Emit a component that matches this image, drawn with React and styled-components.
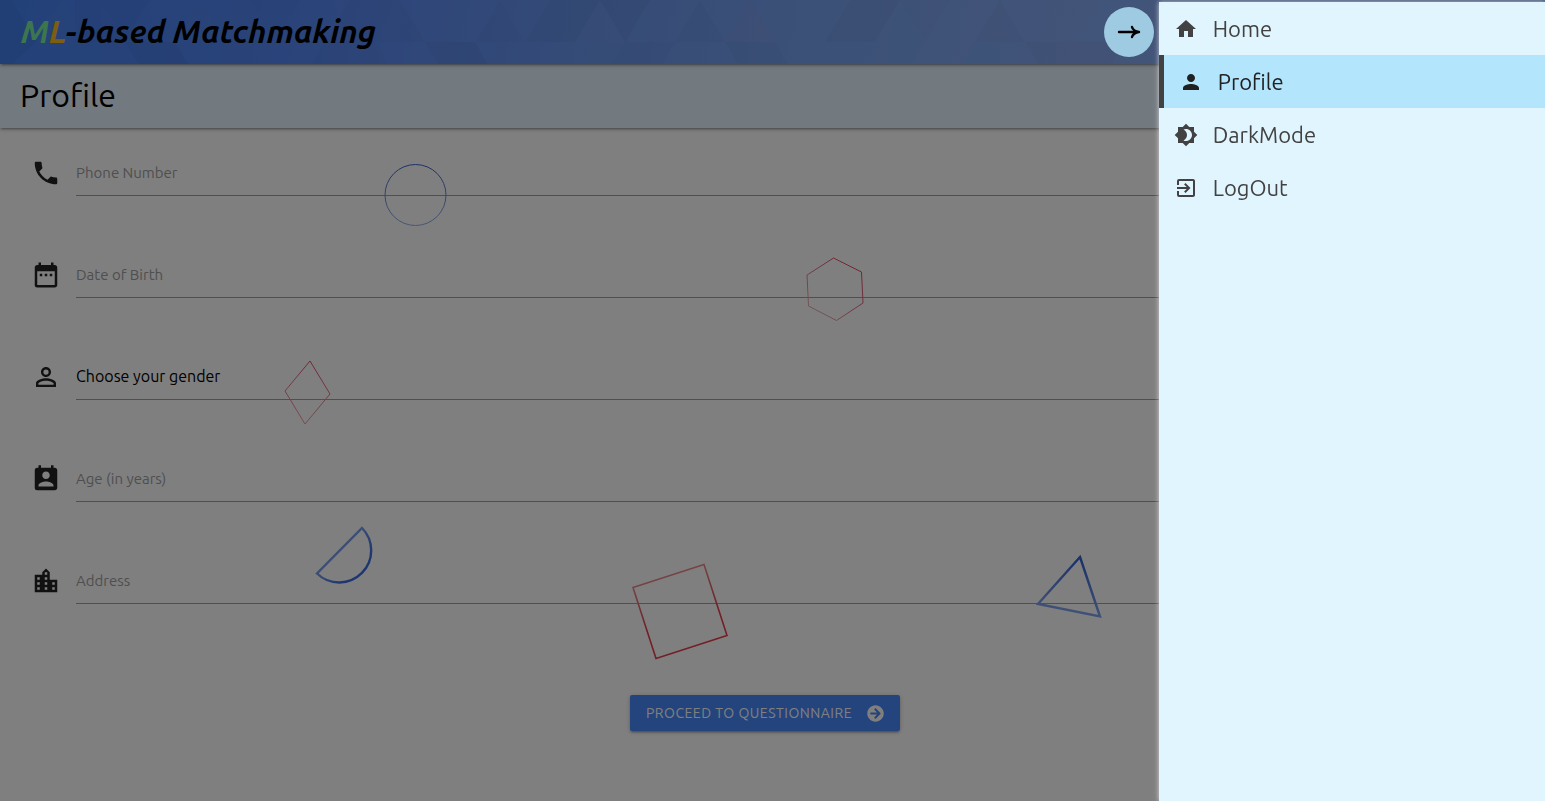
import React from "react";
import styled, { createGlobalStyle } from "styled-components";
import {
  MdHome,
  MdPerson,
  MdBrightness4,
  MdExitToApp,
  MdPhone,
  MdDateRange,
  MdPersonOutline,
  MdPermContactCalendar,
  MdLocationCity,
} from "react-icons/md";
import { FaArrowCircleRight } from "react-icons/fa";

const GlobalStyle = createGlobalStyle`
  *, *::before, *::after { box-sizing: border-box; }
  html, body { margin: 0; background: #fff; overflow: hidden; }
  body, button, input, select {
    font-family: Ubuntu, "Noto Sans", "Open Sans", sans-serif;
    font-weight: 430;
  }
`;

const barShadow = "0 2px 2px rgba(0, 0, 0, 0.14), 0 3px 1px -2px rgba(0, 0, 0, 0.12), 0 1px 5px rgba(0, 0, 0, 0.2)";

const Page = styled.div`
  position: relative;
  min-height: 100vh;
`;

const TopBar = styled.header`
  position: relative;
  z-index: 1;
  display: flex;
  align-items: center;
  height: 64px;
  padding: 0 21px;
  background: linear-gradient(100deg, #4683f2 0%, #5688f4 20%, #6896f0 36%, #78a2ee 52%, #86a8f2 70%, #8aabf8 100%);
  box-shadow: ${barShadow};
`;

const Pattern = styled.svg`
  position: absolute;
  inset: 0;
  width: 100%;
  height: 100%;
`;

const Brand = styled.h1`
  position: relative;
  margin: 0 0 2px;
  font-size: 32px;
  line-height: 60px;
  font-style: italic;
  font-weight: 670;
  white-space: nowrap;
  color: #000;
`;

const Letter = styled.span`
  color: ${(p) => p.$color};
`;

const SubBar = styled.div`
  height: 64px;
  padding: 0 20px;
  background: #e4f2ff;
  box-shadow: ${barShadow};
`;

const PageTitle = styled.h2`
  margin: 0;
  font-size: 32px;
  line-height: 62px;
  font-weight: 430;
  color: #000;
`;

const Form = styled.form`
  display: flex;
  flex-direction: column;
  gap: 56px;
  padding: 22px 46px 0 31px;
`;

const Field = styled.div`
  display: grid;
  grid-template-columns: 30px 1fr;
  column-gap: 15px;
  align-items: center;
  height: 46px;

  svg {
    display: block;
    width: 30px;
    height: 30px;
    color: #222;
  }
`;

const FieldLabel = styled.label`
  grid-area: 1 / 2;
  justify-self: start;
  font-size: 15px;
  line-height: 20px;
  color: #9e9e9e;
  cursor: text;
`;

const control = `
  grid-area: 1 / 2;
  width: 100%;
  height: 46px;
  margin: 0;
  padding: 0;
  border: 0;
  border-bottom: 1px solid #9e9e9e;
  border-radius: 0;
  background: transparent;
  color: #000;
  font-size: 16px;
  outline: 0;
`;

const TextInput = styled.input`
  ${control}
`;

const Select = styled.select`
  ${control}
  appearance: none;
  padding-bottom: 2px;
`;

const Actions = styled.div`
  display: flex;
  justify-content: center;
  padding-top: 35px;
`;

const Submit = styled.button`
  display: flex;
  align-items: center;
  gap: 15px;
  height: 36px;
  padding: 0 16px;
  border: 0;
  border-radius: 2px;
  background: #4688f8;
  color: #fff;
  font-size: 14px;
  letter-spacing: 0.5px;
  text-transform: uppercase;
  white-space: nowrap;
  box-shadow: ${barShadow};

  svg { width: 17px; height: 17px; }
`;

const Shapes = styled.svg`
  position: absolute;
  top: 0;
  left: 0;
  pointer-events: none;
`;

const Overlay = styled.div`
  position: fixed;
  z-index: 2;
  inset: 0;
  background: rgba(0, 0, 0, 0.5);
`;

const Drawer = styled.aside`
  position: fixed;
  z-index: 3;
  top: 2px;
  right: 0;
  bottom: 0;
  width: 25%;
  background: #e1f5fe;
  box-shadow: 0 0 5px rgba(255, 255, 255, 0.7);
`;

const CloseButton = styled.button`
  position: absolute;
  top: 5px;
  right: calc(100% + 5px);
  display: grid;
  place-items: center;
  width: 50px;
  height: 50px;
  padding: 0;
  border: 0;
  border-radius: 50%;
  background: #9ecae2;
`;

const Menu = styled.nav`
  display: flex;
  flex-direction: column;
`;

const MenuLink = styled.a`
  display: flex;
  align-items: center;
  gap: 15px;
  height: 53px;
  padding-left: 15px;
  border-left: ${(p) => (p.$active ? "5px solid #424242" : "0")};
  background: ${(p) => (p.$active ? "#b3e5fc" : "transparent")};
  color: ${(p) => (p.$active ? "#212121" : "#424242")};
  font-size: 22px;
  text-decoration: none;

  svg { flex: none; width: 24px; height: 24px; }
`;

const fields = [
  { id: "phone", label: "Phone Number", Icon: MdPhone },
  { id: "dob", label: "Date of Birth", Icon: MdDateRange },
  { id: "gender", label: "Choose your gender", Icon: MdPersonOutline, select: true },
  { id: "age", label: "Age (in years)", Icon: MdPermContactCalendar },
  { id: "address", label: "Address", Icon: MdLocationCity },
];

const links = [
  { label: "Home", Icon: MdHome },
  { label: "Profile", Icon: MdPerson, active: true },
  { label: "DarkMode", Icon: MdBrightness4 },
  { label: "LogOut", Icon: MdExitToApp },
];

const triangles = [
  ["0,0 12,0 37,42 12,64 0,64", "#000", 0.03],
  ["75,0 100,0 125,42 75,42", "#000", 0.015],
  ["100,0 150,0 125,42", "#000", 0.025],
  ["37,42 87,42 62,0", "#fff", 0.015],
  ["125,42 175,42 188,64 138,64", "#000", 0.03],
  ["175,42 200,0 225,42", "#fff", 0.015],
  ["250,0 300,0 275,42", "#000", 0.02],
  ["325,42 350,0 375,42", "#000", 0.02],
  ["325,42 375,42 388,64 312,64", "#000", 0.02],
  ["350,0 400,0 425,42 375,42", "#000", 0.02],
  ["425,42 475,42 488,64 438,64", "#000", 0.03],
  ["475,42 500,0 525,42", "#000", 0.015],
  ["550,0 600,0 575,42 525,42", "#000", 0.03],
  ["575,42 600,0 625,42", "#fff", 0.015],
  ["600,0 650,0 625,42", "#000", 0.035],
  ["625,42 675,42 662,64 612,64", "#000", 0.02],
  ["675,42 700,0 725,42", "#000", 0.025],
  ["725,42 775,42 788,64 738,64", "#000", 0.025],
  ["725,42 750,0 775,42", "#f7a", 0.04],
  ["825,42 850,0 900,0 875,42", "#000", 0.03],
  ["875,42 900,0 925,42", "#3cf", 0.03],
  ["825,42 925,42 912,64 838,64", "#3cf", 0.03],
  ["925,42 950,0 900,0", "#000", 0.015],
  ["975,42 1000,0 1025,42", "#000", 0.02],
  ["975,42 1025,42 1012,64 962,64", "#3cf", 0.05],
  ["1025,42 1075,42 1088,64 1038,64", "#000", 0.02],
  ["1075,42 1100,0 1150,0 1125,42", "#3cf", 0.03],
  ["1075,42 1125,42 1112,64 1088,64", "#000", 0.02],
];

export default function App() {
  return (
    <>
      <GlobalStyle />
      <Page>
        <TopBar>
          <Pattern aria-hidden="true">
            {triangles.map(([points, fill, opacity]) => (
              <polygon key={points} points={points} fill={fill} opacity={opacity} />
            ))}
          </Pattern>
          <Brand>
            <Letter $color="#78ec9c">M</Letter>
            <Letter $color="#fabb20">L</Letter>
            -based Matchmaking
          </Brand>
        </TopBar>
        <SubBar>
          <PageTitle>Profile</PageTitle>
        </SubBar>
        <Form onSubmit={(e) => e.preventDefault()}>
          {fields.map(({ id, label, Icon, select }) =>
            select ? (
              <Field key={id}>
                <label htmlFor={id} aria-label={label}>
                  <Icon aria-hidden="true" />
                </label>
                <Select id={id} defaultValue="" aria-label={label}>
                  <option value="">{label}</option>
                </Select>
              </Field>
            ) : (
              <Field key={id}>
                <Icon aria-hidden="true" />
                <TextInput id={id} type="text" />
                <FieldLabel htmlFor={id}>{label}</FieldLabel>
              </Field>
            )
          )}
          <Actions>
            <Submit type="submit">
              Proceed to Questionnaire
              <FaArrowCircleRight aria-hidden="true" />
            </Submit>
          </Actions>
        </Form>
        <Shapes width="1160" height="700" viewBox="0 0 1160 700" fill="none" aria-hidden="true">
          <defs>
            <linearGradient id="blueDown" x1="0" y1="0" x2="0" y2="1">
              <stop offset="0" stopColor="#3c5ed4" />
              <stop offset="1" stopColor="#94aee0" />
            </linearGradient>
            <linearGradient id="blueDiag" x1="0" y1="0" x2="1" y2="1">
              <stop offset="0.3" stopColor="#8cacec" />
              <stop offset="0.75" stopColor="#3c6ce0" />
            </linearGradient>
            <linearGradient id="blueTri" x1="0.6" y1="0" x2="0.4" y2="1">
              <stop offset="0" stopColor="#3460d0" />
              <stop offset="1" stopColor="#88aaf0" />
            </linearGradient>
            <linearGradient id="redDown" x1="0.6" y1="0" x2="0.4" y2="1">
              <stop offset="0" stopColor="#e05070" />
              <stop offset="1" stopColor="#e8a0a0" />
            </linearGradient>
            <linearGradient id="redHex" x1="1" y1="0.2" x2="0.3" y2="1">
              <stop offset="0" stopColor="#e04864" />
              <stop offset="0.5" stopColor="#dc7088" />
              <stop offset="1" stopColor="#e8a8a8" />
            </linearGradient>
            <linearGradient id="redUp" x1="0.3" y1="0" x2="0.6" y2="1">
              <stop offset="0" stopColor="#ec9c9c" />
              <stop offset="0.6" stopColor="#e04050" />
              <stop offset="1" stopColor="#e44048" />
            </linearGradient>
          </defs>
          <circle cx="415.5" cy="195" r="30.5" stroke="url(#blueDown)" />
          <path d="M310 361L330 394L305 424L285 391Z" stroke="url(#redDown)" />
          <path d="M833.5 258L861.5 272L863 303L836.5 320.5L808.5 306L807 275Z" stroke="url(#redHex)" />
          <path d="M362 528A32 32 0 0 1 317 573.5Z" stroke="url(#blueDiag)" strokeWidth="2.4" />
          <path d="M633 587.5L704 564.5L727 635.5L656 658.5Z" stroke="url(#redUp)" strokeWidth="1.6" />
          <path d="M1080 557L1100 616.5L1038 604Z" stroke="url(#blueTri)" strokeWidth="2.4" />
        </Shapes>
      </Page>
      <Overlay />
      <Drawer>
        <CloseButton type="button" aria-label="Close menu">
          <svg width="24" height="14" viewBox="0 0 24 14" fill="none" stroke="#000" strokeWidth="2.4" strokeLinecap="round" strokeLinejoin="round" aria-hidden="true">
            <path d="M2 7H22M15 2Q16 6 22 7Q16 8 15 12" />
          </svg>
        </CloseButton>
        <Menu>
          {links.map(({ label, Icon, active }) => (
            <MenuLink key={label} href="#" $active={active}>
              <Icon aria-hidden="true" />
              {label}
            </MenuLink>
          ))}
        </Menu>
      </Drawer>
    </>
  );
}
